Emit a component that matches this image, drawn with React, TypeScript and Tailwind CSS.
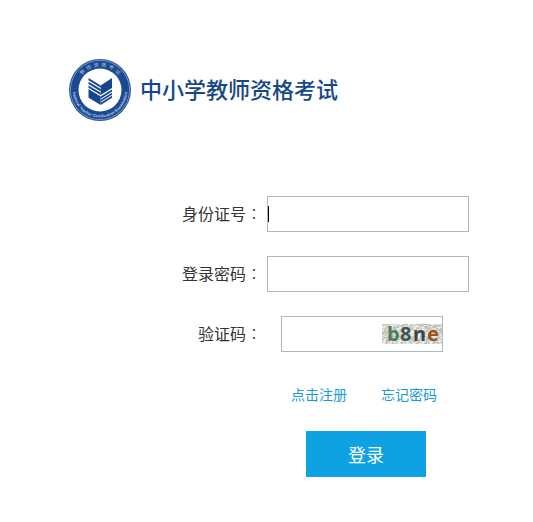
import React, { useState } from 'react';

const inputClass = 'h-9 w-full border border-[#a9b9c3] bg-white px-1 text-base text-[#333333] outline-none';

const Logo: React.FC = () => (
  <svg className="h-16 w-16 shrink-0 overflow-visible" viewBox="0 0 64 64" role="img" aria-label="National Teacher Certification Examination">
    <defs>
      <path id="ring-top" d="M 8.5 32 A 23.5 23.5 0 0 1 55.5 32" />
      <path id="ring-bottom" d="M 5 29 A 27.2 27.2 0 1 0 59 29" />
    </defs>
    <circle cx="32" cy="32" r="31" fill="#2a5697" />
    <circle cx="32" cy="32" r="29.5" fill="none" stroke="#9db6d8" strokeWidth="0.7" />
    <circle cx="32" cy="32" r="29" fill="#1a4b92" />
    <circle cx="32" cy="32" r="21.5" fill="#ffffff" />
    <text fill="#a9bfde" fontSize="5" fontFamily="'Noto Sans CJK SC', sans-serif" textAnchor="middle">
      <textPath href="#ring-top" startOffset="50%">教&#160; 师&#160; 资&#160; 格&#160; 考&#160; 试</textPath>
    </text>
    <text fill="#b9cae3" fontSize="4" fontWeight="bold" fontFamily="'Liberation Sans', sans-serif" textAnchor="middle">
      <textPath href="#ring-bottom" startOffset="50%">National Teacher Certification Examination</textPath>
    </text>
    {/* open book */}
    <g fill="#17468d">
      <path d="M20.5 20 L32.7 27.4 V29.7 L20.5 22.3Z" />
      <path d="M20.5 23.7 L32.7 31.1 V33.4 L20.5 26Z" />
      <path d="M20.5 27.4 L32.7 34.8 V37.1 L20.5 29.7Z" />
      <path d="M20.5 31.1 L32.7 38.5 V47 L20.5 39.8Z" />
      <path d="M32.7 27.4 L44 20 V30 L32.7 37.1Z" />
      <path d="M32.7 38.5 L44 31.4 V33.6 L32.7 40.7Z" />
      <path d="M32.7 41.8 L44 34.7 V36.7 L32.7 43.8Z" />
      <path d="M32.7 44.8 L44 37.7 V39.8 L32.7 47Z" />
    </g>
  </svg>
);

const Captcha: React.FC = () => (
  <svg className="h-5 w-[60px] overflow-visible" viewBox="0 0 60 20" role="img" aria-label="验证码图片">
    <defs>
      <pattern id="grain" width="7" height="5" patternUnits="userSpaceOnUse" patternTransform="rotate(28)">
        <path d="M0 1 L3 0 M4 2 L7 3 M0 4 L2 3 M5 4.5 L6 0" stroke="#a8a8a2" strokeWidth="0.8" />
      </pattern>
    </defs>
    <rect width="60" height="20" fill="#eeeeea" />
    <rect width="60" height="20" fill="url(#grain)" />
    <g fill="none" stroke="#aaa69f" strokeWidth="0.7">
      <path d="M0 4 Q8 10 4 20 M2 0 Q14 8 10 20 M24 0 Q34 9 58 20 M34 0 Q48 2 59 16 M40 0 Q56 1 60 10" />
      <path d="M0 15 Q24 7 36 20 M0 10 Q18 2 24 0 M36 19 Q44 2 60 1 M44 20 Q46 7 60 5" />
    </g>
    <g fontFamily="'Noto Sans', sans-serif" fontWeight="bold" fontSize="20">
      <text x="5" y="17" fill="#4d7c5a">b</text>
      <text x="18" y="17" fill="#405453">8</text>
      <text x="31" y="17" fill="#424149">n</text>
      <text x="45" y="17" fill="#985322">e</text>
    </g>
  </svg>
);

interface FieldProps {
  id: string;
  label: string;
  children: React.ReactNode;
}

const Field: React.FC<FieldProps> = ({ id, label, children }) => (
  <div className="flex items-center gap-[5px]">
    <label htmlFor={id} className="w-20 shrink-0 pb-0.5 text-right text-base whitespace-nowrap text-[#333333]">
      {label}
      <span className="font-['Noto_Sans_CJK_TC',sans-serif] font-light">：</span>
    </label>
    <div className="w-full max-w-[202px]">{children}</div>
  </div>
);

const App: React.FC = () => {
  const [idNumber, setIdNumber] = useState('');
  const [password, setPassword] = useState('');
  const [code, setCode] = useState('');

  return (
    <main className="min-h-screen bg-white pt-[58px] pb-11 font-['Noto_Sans_CJK_SC',sans-serif]">
      <header className="flex items-center gap-2 pl-[68px]">
        <Logo />
        <h1 className="pb-1 text-[22px] leading-8 font-medium whitespace-nowrap text-[#174784]">中小学教师资格考试</h1>
      </header>

      <form className="mt-[74px] pr-16 pl-[182px]" onSubmit={e => e.preventDefault()}>
        <div className="space-y-6">
          <Field id="id-number" label="身份证号">
            <div className="relative">
              <input
                id="id-number"
                type="text"
                value={idNumber}
                onChange={e => setIdNumber(e.target.value)}
                className={inputClass}
              />
              {idNumber === '' && <span className="absolute top-2.5 left-px h-4 w-px bg-black" />}
            </div>
          </Field>

          <Field id="password" label="登录密码">
            <input
              id="password"
              type="password"
              value={password}
              onChange={e => setPassword(e.target.value)}
              className={inputClass}
            />
          </Field>

          <Field id="code" label="验证码">
            <div className="relative mr-[26px] ml-3.5">
              <input
                id="code"
                type="text"
                value={code}
                onChange={e => setCode(e.target.value)}
                className={inputClass}
              />
              <div className="absolute top-2 right-px">
                <Captcha />
              </div>
            </div>
          </Field>
        </div>

        <div className="mt-[30px] flex gap-[34px] pl-[109px] text-sm leading-6 whitespace-nowrap text-[#199ad8]">
          <a href="#register">点击注册</a>
          <a href="#forgot">忘记密码</a>
        </div>

        <div className="mt-[25px] pl-[124px]">
          <button type="submit" className="h-[46px] w-[120px] bg-[#0fa2e2] text-lg text-white">
            登录
          </button>
        </div>
      </form>
    </main>
  );
};

export default App;
